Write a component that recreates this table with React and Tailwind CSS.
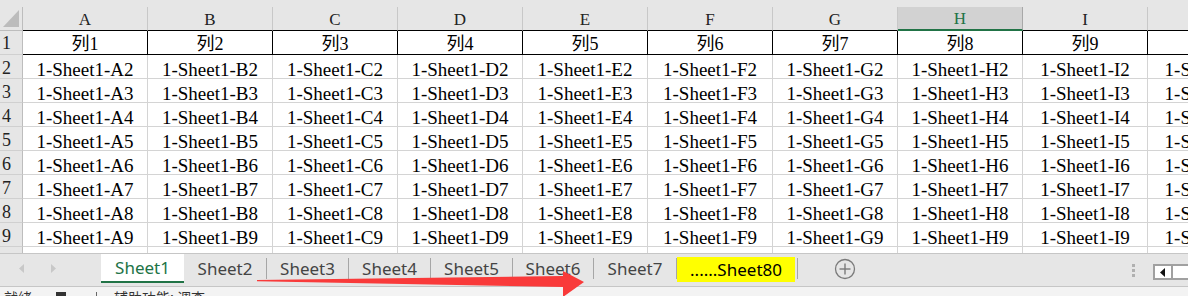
import React from 'react';

const cols = ['A', 'B', 'C', 'D', 'E', 'F', 'G', 'H', 'I', 'J'];
const dataRows = [2, 3, 4, 5, 6, 7, 8, 9];
const cellFont = { fontFamily: '"Liberation Serif", "Noto Sans CJK SC", serif' };

const tabs = [
  { name: 'Sheet2', w: 'w-[82px]' },
  { name: 'Sheet3', w: 'w-[81px]' },
  { name: 'Sheet4', w: 'w-[81px]' },
  { name: 'Sheet5', w: 'w-[81px]' },
  { name: 'Sheet6', w: 'w-[80px]' },
  { name: 'Sheet7', w: 'w-[82px]' },
];

function ColumnHeader() {
  return (
    <div className="flex h-[24px]">
      <div className="w-[23px] shrink-0 border-r border-b border-[#bdbdbd] bg-[#e6e6e6]">
        <svg width="22" height="23" viewBox="0 0 22 23">
          <polygon points="3,20 19,20 19,3" fill="#bcbcbc" />
        </svg>
      </div>
      {cols.map((c) =>
        c === 'H' ? (
          <div
            key={c}
            className="w-[125px] shrink-0 border-r border-[#a8a8a8] border-b-2 border-b-[#217346] bg-[#d2d2d2] text-center text-[17px] leading-[22px] pt-[1px] text-[#217346]"
          >
            {c}
          </div>
        ) : (
          <div
            key={c}
            className="w-[125px] shrink-0 border-r border-[#c8c8c8] border-b border-b-black bg-[#e6e6e6] text-center text-[17px] leading-[23px] pt-[1px] text-[#222]"
          >
            {c}
          </div>
        )
      )}
    </div>
  );
}

function RowHead({ n, pt = 'pt-[2px]' }) {
  return (
    <div className={`w-[23px] h-[24px] shrink-0 border-r border-b border-r-[#bdbdbd] border-b-[#d0d0d0] bg-[#e6e6e6] pl-[2px] text-[18px] leading-[23px] ${pt} text-[#222] overflow-hidden`}>
      {n}
    </div>
  );
}

function SheetTabs() {
  return (
    <div className="flex h-[34px] border-t border-b border-[#c6c6c6] bg-[#e6e6e6]">
      {/* nav arrows */}
      <div className="w-[101px] shrink-0 flex items-center pb-[2px]">
        <svg width="101" height="20" viewBox="0 0 101 20">
          <polygon points="24,5 24,14 19,9.5" fill="#c8c8c8" />
          <polygon points="51,5 51,14 56,9.5" fill="#c8c8c8" />
        </svg>
      </div>

      <div className="flex items-start" style={{ fontFamily: '"Noto Sans", sans-serif' }}>
        <div className="w-[83px] h-[29px] bg-white border-b-2 border-[#217346] flex items-center justify-center text-[17px] text-[#217346]">
          Sheet1
        </div>
        {tabs.map((t) => (
          <React.Fragment key={t.name}>
            <div className={`${t.w} h-[29px] flex items-center justify-center text-[17px] text-[#444]`}>
              {t.name}
            </div>
            <div className="w-px h-[21px] mt-[4px] bg-[#a6a6a6]" />
          </React.Fragment>
        ))}
        <div className="w-[120px] h-[29px] pt-[3px]">
          <div className="w-[118px] h-[25px] bg-[#ffff00] flex items-center justify-center text-[17px] text-black">
            ......Sheet80
          </div>
        </div>
        <div className="w-px h-[21px] mt-[4px] bg-[#a6a6a6]" />
      </div>

      <div className="w-[36px] shrink-0" />
      <div className="w-[22px] shrink-0 flex items-center pb-[3px]">
        <svg width="22" height="22" viewBox="0 0 22 22">
          <circle cx="11" cy="11" r="9.5" fill="none" stroke="#7a7a7a" strokeWidth="1.3" />
          <line x1="5.5" y1="11" x2="16.5" y2="11" stroke="#7a7a7a" strokeWidth="1.4" />
          <line x1="11" y1="5.5" x2="11" y2="16.5" stroke="#7a7a7a" strokeWidth="1.4" />
        </svg>
      </div>
      <div className="w-[276px] shrink-0" />
      <div className="w-[4px] shrink-0 flex flex-col gap-[2px] pt-[10px]">
        <div className="w-[3px] h-[3px] bg-[#b0b0b0]" />
        <div className="w-[3px] h-[3px] bg-[#b0b0b0]" />
        <div className="w-[3px] h-[3px] bg-[#b0b0b0]" />
      </div>
      <div className="w-[17px] shrink-0" />
      <div className="flex shrink-0 pt-[10px]">
        <div className="w-[20px] h-[16px] border-2 border-[#a0a0a0] bg-white flex items-center justify-center">
          <svg width="6" height="9" viewBox="0 0 6 9">
            <polygon points="5,0 5,9 0,4.5" fill="#111" />
          </svg>
        </div>
        <div className="w-[40px] h-[16px] border-y-2 border-[#a0a0a0] bg-white" />
      </div>
    </div>
  );
}

export default function App() {
  return (
    <div className="relative w-[1188px] h-[296px] overflow-hidden bg-white">
      <div style={cellFont}>
        <div className="h-[7px] bg-[#e6e6e6]" />
        <ColumnHeader />

        {/* row 1 : header titles with black borders */}
        <div className="flex">
          <RowHead n={1} pt="pt-[1px]" />
          {cols.map((c, i) => (
            <div
              key={c}
              className="w-[125px] h-[24px] shrink-0 border-r border-b border-black text-center text-[18px] leading-[23px] pt-[2px] text-black whitespace-nowrap"
            >
              {i < 9 ? `列${i + 1}` : ''}
            </div>
          ))}
        </div>

        {dataRows.map((r) => (
          <div key={r} className="flex">
            <RowHead n={r} />
            {cols.map((c) => (
              <div
                key={c}
                className="w-[125px] h-[24px] shrink-0 border-r border-b border-[#d4d4d4] text-center text-[19px] leading-[23px] pt-[3px] text-black whitespace-nowrap overflow-hidden"
              >
                {`1-Sheet1-${c}${r}`}
              </div>
            ))}
          </div>
        ))}

        {/* partial row 10 */}
        <div className="flex h-[6px]">
          <div className="w-[23px] shrink-0 border-r border-[#bdbdbd] bg-[#e6e6e6]" />
          {cols.map((c) => (
            <div key={c} className="w-[125px] shrink-0 border-r border-[#d4d4d4]" />
          ))}
        </div>
      </div>

      <SheetTabs />

      {/* status bar */}
      <div className="h-[12px] bg-[#f3f3f3] flex items-start pt-[3px] text-[14px] leading-none text-[#333]" style={{ fontFamily: '"Noto Sans CJK SC", sans-serif' }}>
        <span className="ml-[4px]">就绪</span>
        <span className="ml-[24px] mt-[2px] w-[10px] h-[8px] bg-[#333]" />
        <span className="ml-[30px] mt-[2px] w-[3px] h-[6px] border-l border-[#666]" />
        <span className="ml-[15px]">辅助功能: 调查</span>
      </div>

      {/* red annotation arrow */}
      <svg className="absolute left-0 top-0 pointer-events-none" width="1188" height="296" viewBox="0 0 1188 296">
        <polygon
          points="257,280 563,276 563,271 584,282 563,297 563,287 257,281.3"
          fill="#f93a3a"
        />
      </svg>
    </div>
  );
}
